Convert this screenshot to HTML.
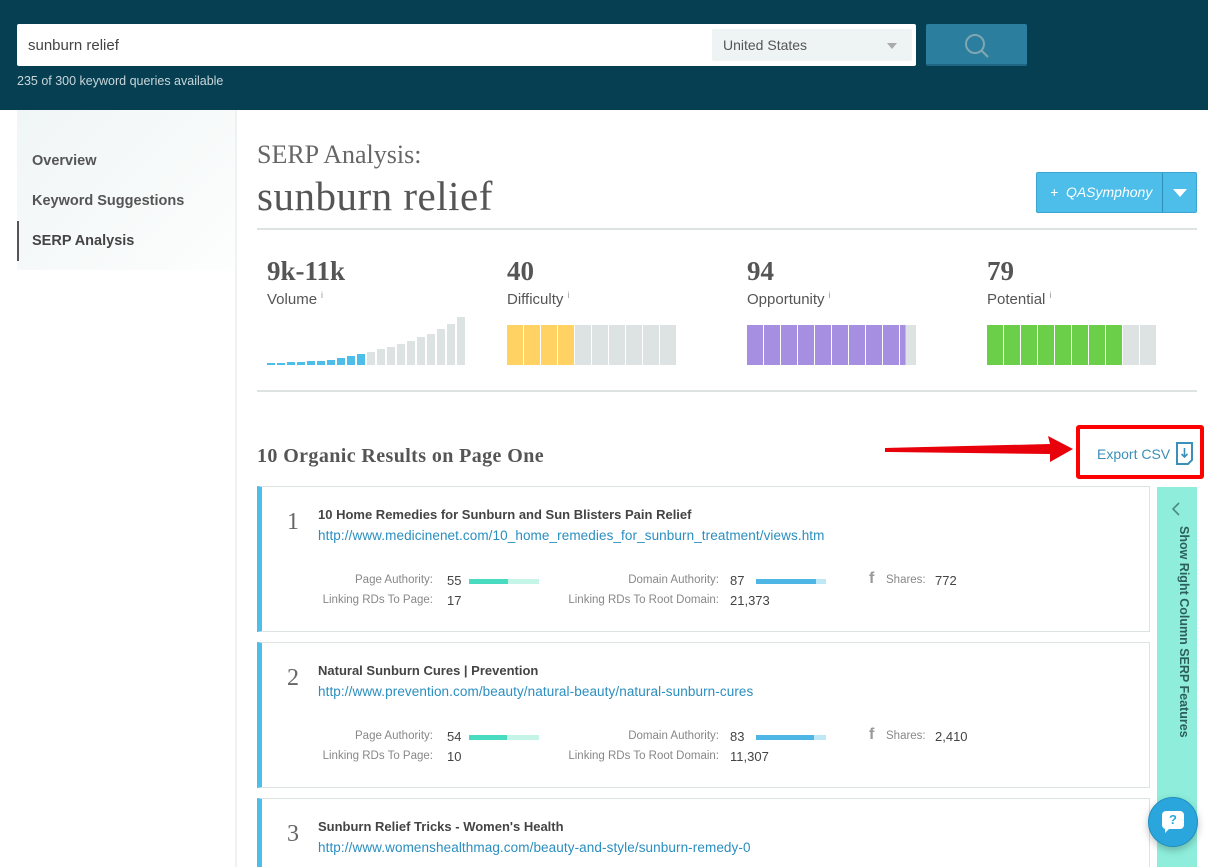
<!DOCTYPE html>
<html style="overflow:hidden;height:867px"><head><style>
*{margin:0;padding:0;box-sizing:border-box}
body{width:1208px;height:867px;overflow:hidden;background:#fff;font-family:"Liberation Sans",sans-serif;position:relative;color:#555}
.a{position:absolute}
.hdr{left:0;top:0;width:1208px;height:110px;background:#073f52}
.serif{font-family:"Liberation Serif",serif}
.num{font-family:"Liberation Serif",serif;font-weight:bold;font-size:27px;color:#555}
.lbl{font-size:15px;color:#555}
.lbl sup{font-size:9px;color:#999;margin-left:4px}
.card{left:257px;width:893px;height:146px;border:1px solid #dde3e2;border-left:5px solid #4dbde9;background:#fff}
.card .n{position:absolute;left:25px;top:22px;font-size:24px;color:#666;font-family:"Liberation Serif",serif;font-weight:300}
.card .t{position:absolute;left:56px;top:20px;font-size:13px;font-weight:bold;color:#444}
.card .u{position:absolute;left:56px;top:41px;font-size:13.5px;color:#2a8ec0;letter-spacing:0.1px}
.card .k{position:absolute;font-size:11.5px;color:#888;text-align:right}
.card .v{position:absolute;font-size:13px;color:#444}
.bar{position:absolute;height:5px}
</style></head><body>
<div class="a hdr"></div>
<div class="a" style="left:17px;top:24px;width:899px;height:42px;background:#fff;border-radius:2px"></div>
<div class="a" style="left:28px;top:37px;font-size:15px;color:#444">sunburn relief</div>
<div class="a" style="left:712px;top:29px;width:200px;height:32px;background:#eef4f3;border-radius:2px"></div>
<div class="a" style="left:723px;top:37px;font-size:14px;color:#555">United States</div>
<div class="a" style="left:887px;top:43px;width:0;height:0;border-left:5px solid transparent;border-right:5px solid transparent;border-top:6px solid #aaa"></div>
<div class="a" style="left:926px;top:24px;width:101px;height:42px;background:#2b7e9e;border-radius:2px;border-bottom:2px solid #1f6684"></div>
<svg class="a" style="left:963px;top:32px" width="30" height="28"><circle cx="12" cy="12" r="9" fill="none" stroke="#7fa6b2" stroke-width="2"/><line x1="18.5" y1="18.5" x2="25" y2="25" stroke="#7fa6b2" stroke-width="2.2"/></svg>
<div class="a" style="left:17px;top:74px;font-size:12.5px;color:#c8d6da">235 of 300 keyword queries available</div>

<div class="a" style="left:17px;top:110px;width:219px;height:160px;background:linear-gradient(135deg,#f0f5f5,#fdfefe)"></div>
<div class="a" style="left:235px;top:110px;width:2px;height:757px;background:#eef2f2"></div>
<div class="a" style="left:32px;top:153px;font-size:14.5px;font-weight:bold;color:#555">Overview</div>
<div class="a" style="left:32px;top:193px;font-size:14.5px;font-weight:bold;color:#555">Keyword Suggestions</div>
<div class="a" style="left:17px;top:221px;width:2px;height:40px;background:#555"></div>
<div class="a" style="left:32px;top:233px;font-size:14.5px;font-weight:bold;color:#444">SERP Analysis</div>

<div class="a serif" style="left:257px;top:140px;font-size:26px;color:#666">SERP Analysis:</div>
<div class="a serif" style="left:257px;top:172px;font-size:41px;color:#555;letter-spacing:0.5px">sunburn relief</div>
<div class="a" style="left:1036px;top:172px;width:161px;height:41px;background:#4dbde9;border:1px solid #3aa5d1;border-radius:2px"></div>
<div class="a" style="left:1050px;top:184px;font-size:14px;color:#fff;font-style:italic">+&nbsp; QASymphony</div>
<div class="a" style="left:1162px;top:173px;width:1px;height:39px;background:#2f8fb8"></div>
<div class="a" style="left:1173px;top:189px;border-left:7px solid transparent;border-right:7px solid transparent;border-top:8px solid #fff"></div>
<div class="a" style="left:257px;top:228px;width:940px;height:2px;background:#dde3e2"></div>

<div class="a num" style="left:267px;top:256px">9k-11k</div>
<div class="a lbl" style="left:267px;top:290px">Volume<sup>i</sup></div>
<div class="a num" style="left:507px;top:256px">40</div>
<div class="a lbl" style="left:507px;top:290px">Difficulty<sup>i</sup></div>
<div class="a num" style="left:747px;top:256px">94</div>
<div class="a lbl" style="left:747px;top:290px">Opportunity<sup>i</sup></div>
<div class="a num" style="left:987px;top:256px">79</div>
<div class="a lbl" style="left:987px;top:290px">Potential<sup>i</sup></div>

<div class="a" style="left:267px;top:317px;width:200px;height:48px;display:flex;align-items:flex-end;gap:2px">
<div style="width:8px;height:2px;background:#4dbde9"></div><div style="width:8px;height:2px;background:#4dbde9"></div><div style="width:8px;height:3px;background:#4dbde9"></div><div style="width:8px;height:3px;background:#4dbde9"></div><div style="width:8px;height:4px;background:#4dbde9"></div><div style="width:8px;height:4px;background:#4dbde9"></div><div style="width:8px;height:5px;background:#4dbde9"></div><div style="width:8px;height:7px;background:#4dbde9"></div><div style="width:8px;height:9px;background:#4dbde9"></div><div style="width:8px;height:11px;background:#4dbde9"></div>
<div style="width:8px;height:13px;background:#dce3e2"></div><div style="width:8px;height:16px;background:#dce3e2"></div><div style="width:8px;height:18px;background:#dce3e2"></div><div style="width:8px;height:21px;background:#dce3e2"></div><div style="width:8px;height:24px;background:#dce3e2"></div><div style="width:8px;height:28px;background:#dce3e2"></div><div style="width:8px;height:31px;background:#dce3e2"></div><div style="width:8px;height:36px;background:#dce3e2"></div><div style="width:8px;height:41px;background:#dce3e2"></div><div style="width:8px;height:48px;background:#dce3e2"></div>
</div>
<div class="a" style="left:507px;top:325px;display:flex;gap:1px">
<div style="width:16px;height:40px;background:#ffd263"></div><div style="width:16px;height:40px;background:#ffd263"></div><div style="width:16px;height:40px;background:#ffd263"></div><div style="width:16px;height:40px;background:#ffd263"></div><div style="width:16px;height:40px;background:#dce3e2"></div><div style="width:16px;height:40px;background:#dce3e2"></div><div style="width:16px;height:40px;background:#dce3e2"></div><div style="width:16px;height:40px;background:#dce3e2"></div><div style="width:16px;height:40px;background:#dce3e2"></div><div style="width:16px;height:40px;background:#dce3e2"></div></div>
<div class="a" style="left:747px;top:325px;display:flex;gap:1px">
<div style="width:16px;height:40px;background:#a68ee0"></div><div style="width:16px;height:40px;background:#a68ee0"></div><div style="width:16px;height:40px;background:#a68ee0"></div><div style="width:16px;height:40px;background:#a68ee0"></div><div style="width:16px;height:40px;background:#a68ee0"></div><div style="width:16px;height:40px;background:#a68ee0"></div><div style="width:16px;height:40px;background:#a68ee0"></div><div style="width:16px;height:40px;background:#a68ee0"></div><div style="width:16px;height:40px;background:#a68ee0"></div><div style="width:16px;height:40px;background:linear-gradient(90deg,#a68ee0 35%,#dce3e2 35%)"></div></div>
<div class="a" style="left:987px;top:325px;display:flex;gap:1px">
<div style="width:16px;height:40px;background:#6ccf4a"></div><div style="width:16px;height:40px;background:#6ccf4a"></div><div style="width:16px;height:40px;background:#6ccf4a"></div><div style="width:16px;height:40px;background:#6ccf4a"></div><div style="width:16px;height:40px;background:#6ccf4a"></div><div style="width:16px;height:40px;background:#6ccf4a"></div><div style="width:16px;height:40px;background:#6ccf4a"></div><div style="width:16px;height:40px;background:#6ccf4a"></div><div style="width:16px;height:40px;background:#dce3e2"></div><div style="width:16px;height:40px;background:#dce3e2"></div></div>
<div class="a" style="left:257px;top:390px;width:940px;height:2px;background:#dde3e2"></div>

<div class="a serif" style="left:257px;top:445px;font-size:20px;font-weight:bold;color:#555;letter-spacing:0.4px">10 Organic Results on Page One</div>
<svg class="a" style="left:880px;top:432px" width="200" height="36"><polygon points="5,16 170,12 168,4 193,17 170,30 170,22 5,20" fill="#e8000a"/></svg>
<div class="a" style="left:1076px;top:425px;width:128px;height:54px;border:4px solid #f00;border-radius:3px;background:#fff"></div>
<div class="a" style="left:1097px;top:446px;font-size:14px;color:#3b8fb8">Export CSV</div>
<svg class="a" style="left:1175px;top:441px" width="20" height="26"><path d="M2 2h15v17l-4 4H2z" fill="none" stroke="#3b8fb8" stroke-width="2"/><path d="M9.5 7v9M6.5 13l3 3 3-3" fill="none" stroke="#3b8fb8" stroke-width="1.6"/></svg>

<div class="a card" style="top:486px">
<div class="n">1</div><div class="t">10 Home Remedies for Sunburn and Sun Blisters Pain Relief</div>
<div class="u">http://www.medicinenet.com/10_home_remedies_for_sunburn_treatment/views.htm</div>
<div class="k" style="right:716px;top:87px">Page Authority:</div><div class="v" style="left:185px;top:86px">55</div>
<div class="bar" style="left:207px;top:92px;width:70px;background:#c4f5e7"></div><div class="bar" style="left:207px;top:92px;width:39px;background:#49dbc0"></div>
<div class="k" style="right:716px;top:107px">Linking RDs To Page:</div><div class="v" style="left:185px;top:106px">17</div>
<div class="k" style="right:430px;top:87px">Domain Authority:</div><div class="v" style="left:468px;top:86px">87</div>
<div class="bar" style="left:494px;top:92px;width:70px;background:#bfe8f7"></div><div class="bar" style="left:494px;top:92px;width:60px;background:#4db6e4"></div>
<div class="k" style="right:430px;top:107px">Linking RDs To Root Domain:</div><div class="v" style="left:468px;top:106px">21,373</div>
<div class="v" style="left:607px;top:83px;font-weight:bold;color:#999;font-size:16px">f</div><div class="k" style="left:624px;top:87px">Shares:</div><div class="v" style="left:673px;top:86px">772</div>
</div>
<div class="a card" style="top:642px">
<div class="n">2</div><div class="t">Natural Sunburn Cures | Prevention</div>
<div class="u">http://www.prevention.com/beauty/natural-beauty/natural-sunburn-cures</div>
<div class="k" style="right:716px;top:87px">Page Authority:</div><div class="v" style="left:185px;top:86px">54</div>
<div class="bar" style="left:207px;top:92px;width:70px;background:#c4f5e7"></div><div class="bar" style="left:207px;top:92px;width:38px;background:#49dbc0"></div>
<div class="k" style="right:716px;top:107px">Linking RDs To Page:</div><div class="v" style="left:185px;top:106px">10</div>
<div class="k" style="right:430px;top:87px">Domain Authority:</div><div class="v" style="left:468px;top:86px">83</div>
<div class="bar" style="left:494px;top:92px;width:70px;background:#bfe8f7"></div><div class="bar" style="left:494px;top:92px;width:58px;background:#4db6e4"></div>
<div class="k" style="right:430px;top:107px">Linking RDs To Root Domain:</div><div class="v" style="left:468px;top:106px">11,307</div>
<div class="v" style="left:607px;top:83px;font-weight:bold;color:#999;font-size:16px">f</div><div class="k" style="left:624px;top:87px">Shares:</div><div class="v" style="left:673px;top:86px">2,410</div>
</div>
<div class="a card" style="top:798px;height:69px;border-bottom:none">
<div class="n">3</div><div class="t">Sunburn Relief Tricks - Women's Health</div>
<div class="u">http://www.womenshealthmag.com/beauty-and-style/sunburn-remedy-0</div>
</div>

<div class="a" style="left:1157px;top:487px;width:40px;height:380px;background:#8eeedb"></div>
<svg class="a" style="left:1170px;top:502px" width="12" height="14"><path d="M9 1L3 7l6 6" fill="none" stroke="#4a8a80" stroke-width="1.6"/></svg>
<div class="a" style="left:1177px;top:526px;writing-mode:vertical-rl;font-size:12.5px;font-weight:bold;color:#2d5f5a;white-space:nowrap">Show Right Column SERP Features</div>
<div class="a" style="left:1148px;top:797px;width:50px;height:50px;border-radius:50%;background:#2aa6dc;box-shadow:0 3px 8px rgba(0,0,0,.25);border:1px solid #1f8fc0"></div>
<div class="a" style="left:1162px;top:811px;width:22px;height:18px;background:#fff;border-radius:4px;color:#2aa6dc;font-size:13px;font-weight:bold;text-align:center;line-height:18px">?</div>
<div class="a" style="left:1165px;top:828px;border-right:5px solid transparent;border-top:5px solid #fff"></div>
</body></html>
